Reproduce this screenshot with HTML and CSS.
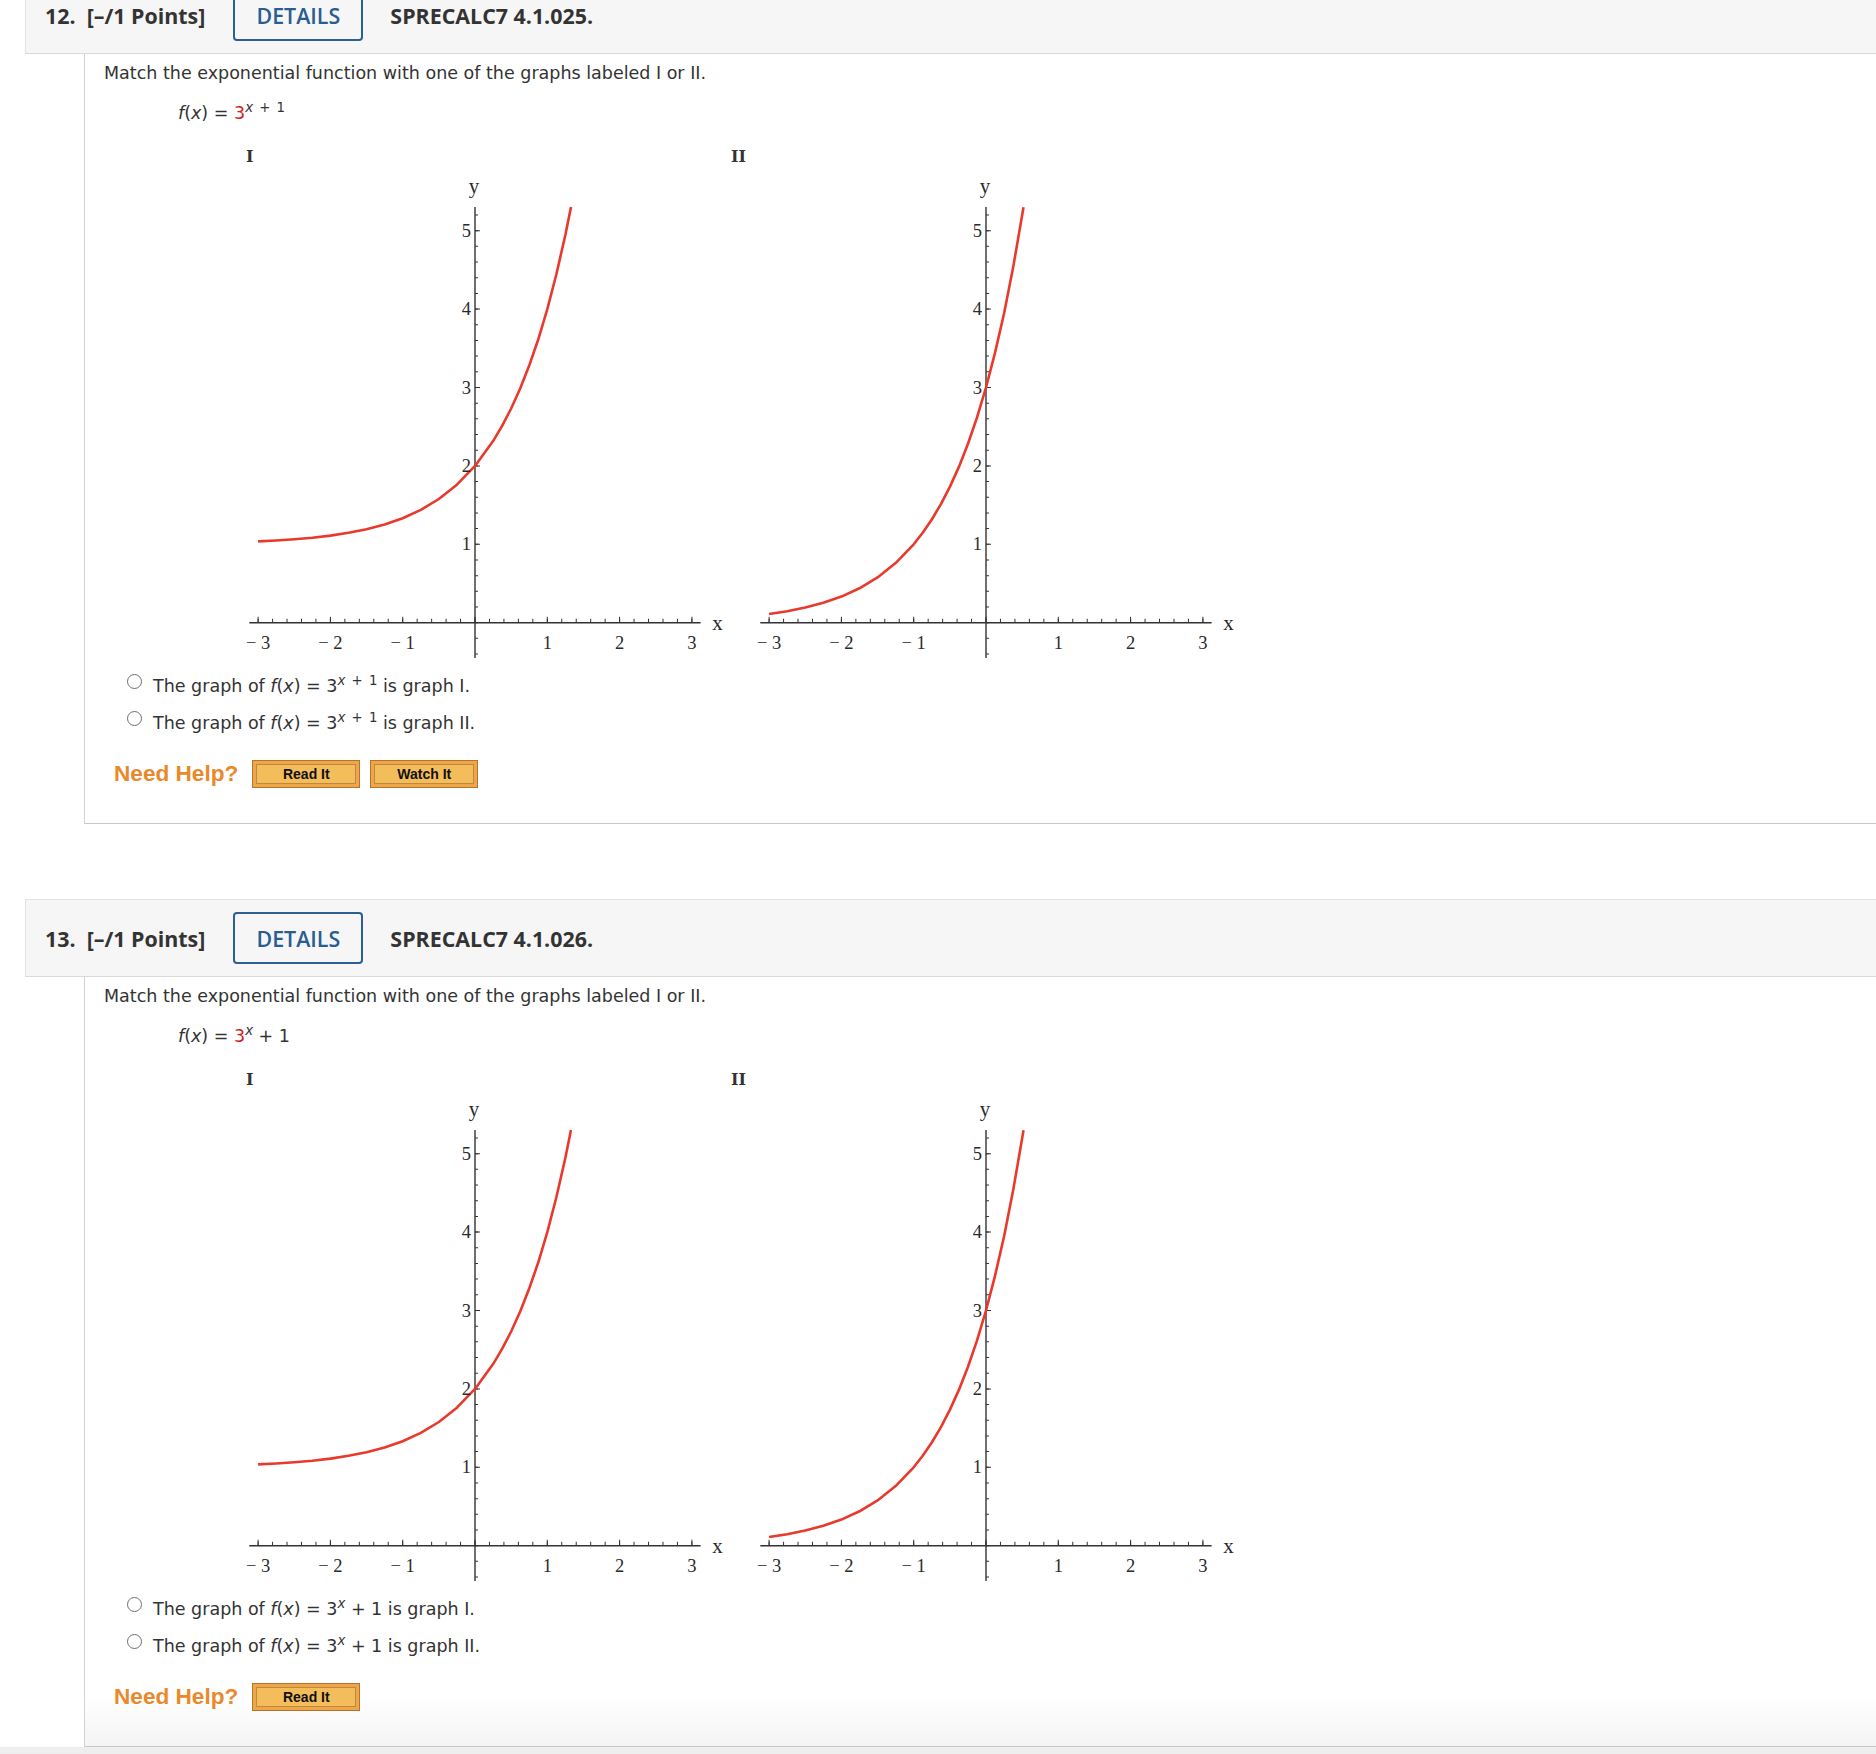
FILE: index.html
```html
<!DOCTYPE html>
<html lang="en">
<head>
<meta charset="utf-8">
<title>SPRECALC7 4.1</title>
<link rel="stylesheet" href="styles.css">
</head>
<body>
<div class="page">

  <section class="question">
    <header class="q-head">
      <span class="q-num">12.&nbsp; [–/1 Points]</span>
      <span class="details">DETAILS</span>
      <span class="q-code">SPRECALC7 4.1.025.</span>
    </header>
    <div class="q-body">
      <p class="prompt">Match the exponential function with one of the graphs labeled I or II.</p>
      <p class="func"><i>f</i>(<i>x</i>) = <span class="red">3</span><sup><i>x</i> + 1</sup></p>
      <div class="figs">
        <figure class="fig fig-1">
          <div class="fig-label">I</div>
          <svg class="plot" width="490" height="500" viewBox="0 0 490 500">
            <line class="axis" x1="13.3" y1="455.7" x2="464.6" y2="455.7"/>
            <line class="axis" x1="239" y1="40" x2="239" y2="491"/>
            <line class="tk-x-minor" x1="21.6" y1="453.7" x2="456.4" y2="453.7"/>
            <line class="tk-x-major" x1="21.6" y1="452.7" x2="456.4" y2="452.7"/>
            <line class="tk-y-minor" x1="240.5" y1="47.5" x2="240.5" y2="487.6"/>
            <line class="tk-y-major" x1="241.5" y1="63.2" x2="241.5" y2="377.8"/>
            <polyline class="curve" points="22.1,374.4 40.2,373.5 58.25,372.3 76.3,370.7 94.4,368.6 112.5,365.8 130.55,362.2 148.6,357.4 166.7,351.2 184.8,342.9 202.85,332.0 220.9,317.7 239,298.9 257.1,274.1 266.1,258.9 275.15,241.5 284.2,221.5 293.2,198.6 302.3,172.3 311.3,142.1 320.3,107.5 329.4,67.8 335.0,40.1"/>
            <text class="tl xl" x="22.1" y="482">− 3</text>
            <text class="tl xl" x="94.4" y="482">− 2</text>
            <text class="tl xl" x="166.7" y="482">− 1</text>
            <text class="tl xl" x="311.3" y="482">1</text>
            <text class="tl xl" x="383.6" y="482">2</text>
            <text class="tl xl" x="455.9" y="482">3</text>
            <text class="tl yl" x="235" y="383.3">1</text>
            <text class="tl yl" x="235" y="304.9">2</text>
            <text class="tl yl" x="235" y="226.5">3</text>
            <text class="tl yl" x="235" y="148.1">4</text>
            <text class="tl yl" x="235" y="69.7">5</text>
            <text class="axl" x="238" y="26">y</text>
            <text class="axl" x="481.5" y="463">x</text>
          </svg>
        </figure>
        <figure class="fig fig-2">
          <div class="fig-label">II</div>
          <svg class="plot" width="490" height="500" viewBox="0 0 490 500">
            <line class="axis" x1="13.3" y1="455.7" x2="464.6" y2="455.7"/>
            <line class="axis" x1="239" y1="40" x2="239" y2="491"/>
            <line class="tk-x-minor" x1="21.6" y1="453.7" x2="456.4" y2="453.7"/>
            <line class="tk-x-major" x1="21.6" y1="452.7" x2="456.4" y2="452.7"/>
            <line class="tk-y-minor" x1="240.5" y1="47.5" x2="240.5" y2="487.6"/>
            <line class="tk-y-major" x1="241.5" y1="63.2" x2="241.5" y2="377.8"/>
            <polyline class="curve" points="22.1,447.0 40.2,444.2 58.25,440.6 76.3,435.8 94.4,429.6 112.5,421.3 130.55,410.4 148.6,396.1 166.7,377.3 175.7,365.8 184.8,352.5 193.8,337.3 202.85,319.9 211.9,299.9 220.9,277.0 229.96,250.7 239,220.5 248.0,185.9 257.1,146.2 266.1,100.6 275.15,48.3 276.5,40.2"/>
            <text class="tl xl" x="22.1" y="482">− 3</text>
            <text class="tl xl" x="94.4" y="482">− 2</text>
            <text class="tl xl" x="166.7" y="482">− 1</text>
            <text class="tl xl" x="311.3" y="482">1</text>
            <text class="tl xl" x="383.6" y="482">2</text>
            <text class="tl xl" x="455.9" y="482">3</text>
            <text class="tl yl" x="235" y="383.3">1</text>
            <text class="tl yl" x="235" y="304.9">2</text>
            <text class="tl yl" x="235" y="226.5">3</text>
            <text class="tl yl" x="235" y="148.1">4</text>
            <text class="tl yl" x="235" y="69.7">5</text>
            <text class="axl" x="238" y="26">y</text>
            <text class="axl" x="481.5" y="463">x</text>
          </svg>
        </figure>
      </div>
      <ul class="choices">
        <li><span class="radio"></span><span>The graph of <i>f</i>(<i>x</i>) = 3<sup><i>x</i> + 1</sup> is graph I.</span></li>
        <li><span class="radio"></span><span>The graph of <i>f</i>(<i>x</i>) = 3<sup><i>x</i> + 1</sup> is graph II.</span></li>
      </ul>
      <div class="help">
        <span class="need">Need Help?</span>
        <span class="btn"><span class="btn-in">Read It</span></span>
        <span class="btn"><span class="btn-in">Watch It</span></span>
      </div>
    </div>
  </section>

  <section class="question last">
    <header class="q-head">
      <span class="q-num">13.&nbsp; [–/1 Points]</span>
      <span class="details">DETAILS</span>
      <span class="q-code">SPRECALC7 4.1.026.</span>
    </header>
    <div class="q-body">
      <p class="prompt">Match the exponential function with one of the graphs labeled I or II.</p>
      <p class="func"><i>f</i>(<i>x</i>) = <span class="red">3</span><sup><i>x</i></sup> + 1</p>
      <div class="figs">
        <figure class="fig fig-1">
          <div class="fig-label">I</div>
          <svg class="plot" width="490" height="500" viewBox="0 0 490 500">
            <line class="axis" x1="13.3" y1="455.7" x2="464.6" y2="455.7"/>
            <line class="axis" x1="239" y1="40" x2="239" y2="491"/>
            <line class="tk-x-minor" x1="21.6" y1="453.7" x2="456.4" y2="453.7"/>
            <line class="tk-x-major" x1="21.6" y1="452.7" x2="456.4" y2="452.7"/>
            <line class="tk-y-minor" x1="240.5" y1="47.5" x2="240.5" y2="487.6"/>
            <line class="tk-y-major" x1="241.5" y1="63.2" x2="241.5" y2="377.8"/>
            <polyline class="curve" points="22.1,374.4 40.2,373.5 58.25,372.3 76.3,370.7 94.4,368.6 112.5,365.8 130.55,362.2 148.6,357.4 166.7,351.2 184.8,342.9 202.85,332.0 220.9,317.7 239,298.9 257.1,274.1 266.1,258.9 275.15,241.5 284.2,221.5 293.2,198.6 302.3,172.3 311.3,142.1 320.3,107.5 329.4,67.8 335.0,40.1"/>
            <text class="tl xl" x="22.1" y="482">− 3</text>
            <text class="tl xl" x="94.4" y="482">− 2</text>
            <text class="tl xl" x="166.7" y="482">− 1</text>
            <text class="tl xl" x="311.3" y="482">1</text>
            <text class="tl xl" x="383.6" y="482">2</text>
            <text class="tl xl" x="455.9" y="482">3</text>
            <text class="tl yl" x="235" y="383.3">1</text>
            <text class="tl yl" x="235" y="304.9">2</text>
            <text class="tl yl" x="235" y="226.5">3</text>
            <text class="tl yl" x="235" y="148.1">4</text>
            <text class="tl yl" x="235" y="69.7">5</text>
            <text class="axl" x="238" y="26">y</text>
            <text class="axl" x="481.5" y="463">x</text>
          </svg>
        </figure>
        <figure class="fig fig-2">
          <div class="fig-label">II</div>
          <svg class="plot" width="490" height="500" viewBox="0 0 490 500">
            <line class="axis" x1="13.3" y1="455.7" x2="464.6" y2="455.7"/>
            <line class="axis" x1="239" y1="40" x2="239" y2="491"/>
            <line class="tk-x-minor" x1="21.6" y1="453.7" x2="456.4" y2="453.7"/>
            <line class="tk-x-major" x1="21.6" y1="452.7" x2="456.4" y2="452.7"/>
            <line class="tk-y-minor" x1="240.5" y1="47.5" x2="240.5" y2="487.6"/>
            <line class="tk-y-major" x1="241.5" y1="63.2" x2="241.5" y2="377.8"/>
            <polyline class="curve" points="22.1,447.0 40.2,444.2 58.25,440.6 76.3,435.8 94.4,429.6 112.5,421.3 130.55,410.4 148.6,396.1 166.7,377.3 175.7,365.8 184.8,352.5 193.8,337.3 202.85,319.9 211.9,299.9 220.9,277.0 229.96,250.7 239,220.5 248.0,185.9 257.1,146.2 266.1,100.6 275.15,48.3 276.5,40.2"/>
            <text class="tl xl" x="22.1" y="482">− 3</text>
            <text class="tl xl" x="94.4" y="482">− 2</text>
            <text class="tl xl" x="166.7" y="482">− 1</text>
            <text class="tl xl" x="311.3" y="482">1</text>
            <text class="tl xl" x="383.6" y="482">2</text>
            <text class="tl xl" x="455.9" y="482">3</text>
            <text class="tl yl" x="235" y="383.3">1</text>
            <text class="tl yl" x="235" y="304.9">2</text>
            <text class="tl yl" x="235" y="226.5">3</text>
            <text class="tl yl" x="235" y="148.1">4</text>
            <text class="tl yl" x="235" y="69.7">5</text>
            <text class="axl" x="238" y="26">y</text>
            <text class="axl" x="481.5" y="463">x</text>
          </svg>
        </figure>
      </div>
      <ul class="choices">
        <li><span class="radio"></span><span>The graph of <i>f</i>(<i>x</i>) = 3<sup><i>x</i></sup> + 1 is graph I.</span></li>
        <li><span class="radio"></span><span>The graph of <i>f</i>(<i>x</i>) = 3<sup><i>x</i></sup> + 1 is graph II.</span></li>
      </ul>
      <div class="help">
        <span class="need">Need Help?</span>
        <span class="btn"><span class="btn-in">Read It</span></span>
      </div>
    </div>
  </section>

</div>
</body>
</html>
```
FILE: styles.css
```css
html {
  background: #eeeeee;
}

body {
  margin: 0;
  display: flow-root;
  background: #ffffff;
  color: #333333;
  font-family: "DejaVu Sans", Verdana, sans-serif;
  font-size: 17.5px;
}

.page {
  margin-top: -24px;
}

.question + .question {
  margin-top: 75px;
}

/* ---------- header bar ---------- */
.q-head {
  margin-left: 25px;
  height: 76px;
  display: flex;
  align-items: center;
  padding-left: 19px;
  background: #f6f6f6;
  border: 1px solid #e3e3e3;
  border-right: none;
  border-bottom-color: #dadada;
  font-family: "Open Sans", "Liberation Sans", sans-serif;
  font-size: 21.4px;
  color: #333333;
}

.q-num {
  font-weight: 700;
  white-space: pre;
}

.details {
  margin-left: 28px;
  width: 126px;
  height: 48px;
  display: flex;
  align-items: center;
  justify-content: center;
  border: 2px solid #2c5f93;
  border-radius: 4px;
  color: #2a5d91;
  font-weight: 600;
  background: #f6f6f6;
}

.q-code {
  margin-left: 27px;
  font-weight: 700;
}

/* ---------- body ---------- */
.q-body {
  margin-left: 84px;
  padding: 9px 0 35px 19px;
  border-left: 1px solid #d2d2d2;
  border-bottom: 1px solid #c9c9c9;
}

.question.last .q-body {
  background: linear-gradient(to bottom, #ffffff calc(100% - 50px), #f4f4f4 100%);
}

.prompt {
  margin: 0;
  line-height: 20px;
}

.func {
  margin: 20px 0 0 74px;
  line-height: 20px;
}

.red {
  color: #d0221a;
}

sup {
  font-size: 0.76em;
  vertical-align: 0.55em;
  line-height: 0;
  word-spacing: 2px;
}

i {
  font-style: italic;
}

/* ---------- figures ---------- */
.figs {
  display: flex;
  margin: 24px 0 0 132px;
}

.fig {
  margin: 0;
  width: 490px;
}

.fig-2 {
  margin-left: 21px;
}

.fig-label {
  font-family: "DejaVu Serif", "Liberation Serif", serif;
  font-weight: 700;
  font-size: 16px;
  line-height: 20px;
  color: #333333;
}

.fig-1 .fig-label {
  padding-left: 10px;
}

.fig-2 .fig-label {
  margin-left: -16px;
}

.plot {
  display: block;
}

.axis {
  stroke: #333333;
  stroke-width: 1.4;
}

.tk-x-minor {
  stroke: #333333;
  stroke-width: 4;
  stroke-dasharray: 1 13.46;
}

.tk-x-major {
  stroke: #333333;
  stroke-width: 6;
  stroke-dasharray: 1 71.3;
}

.tk-y-minor {
  stroke: #333333;
  stroke-width: 3;
  stroke-dasharray: 1 14.68;
}

.tk-y-major {
  stroke: #333333;
  stroke-width: 5;
  stroke-dasharray: 1 77.4;
}

.curve {
  fill: none;
  stroke: #e8392c;
  stroke-width: 2.6;
  stroke-linejoin: round;
  stroke-linecap: butt;
}

.tl {
  font-family: "Liberation Serif", "DejaVu Serif", serif;
  font-size: 18.5px;
  fill: #2a2a2a;
  white-space: pre;
}

.xl {
  text-anchor: middle;
}

.yl {
  text-anchor: end;
}

.axl {
  font-family: "Liberation Serif", "DejaVu Serif", serif;
  font-size: 21px;
  fill: #2a2a2a;
  text-anchor: middle;
}

/* ---------- choices ---------- */
.choices {
  list-style: none;
  margin: 9px 0 0 23px;
  padding: 0;
}

.choices li {
  display: flex;
  align-items: flex-start;
  line-height: 20px;
  margin-bottom: 17px;
}

.choices li:last-child {
  margin-bottom: 0;
}

.radio {
  flex: none;
  width: 13px;
  height: 13px;
  margin-top: -2px;
  margin-right: 11px;
  border: 1px solid #6f6f6f;
  border-radius: 50%;
  background: #ffffff;
}

/* ---------- need help ---------- */
.help {
  display: flex;
  align-items: center;
  margin: 27px 0 0 10px;
  height: 28px;
}

.need {
  font-family: "Liberation Sans", Arial, sans-serif;
  font-weight: 700;
  font-size: 22.6px;
  color: #e8892c;
  margin-right: 14px;
}

.btn {
  display: flex;
  box-sizing: border-box;
  width: 108px;
  height: 28px;
  padding: 3px;
  margin-right: 10px;
  border: 1px solid #b5742c;
  background: #eea64a;
}

.btn-in {
  flex: 1;
  display: flex;
  align-items: center;
  justify-content: center;
  border: 1px solid #c4873a;
  background: #f4bd5c;
  font-family: "Liberation Sans", Arial, sans-serif;
  font-weight: 700;
  font-size: 14px;
  color: #111111;
}
```
